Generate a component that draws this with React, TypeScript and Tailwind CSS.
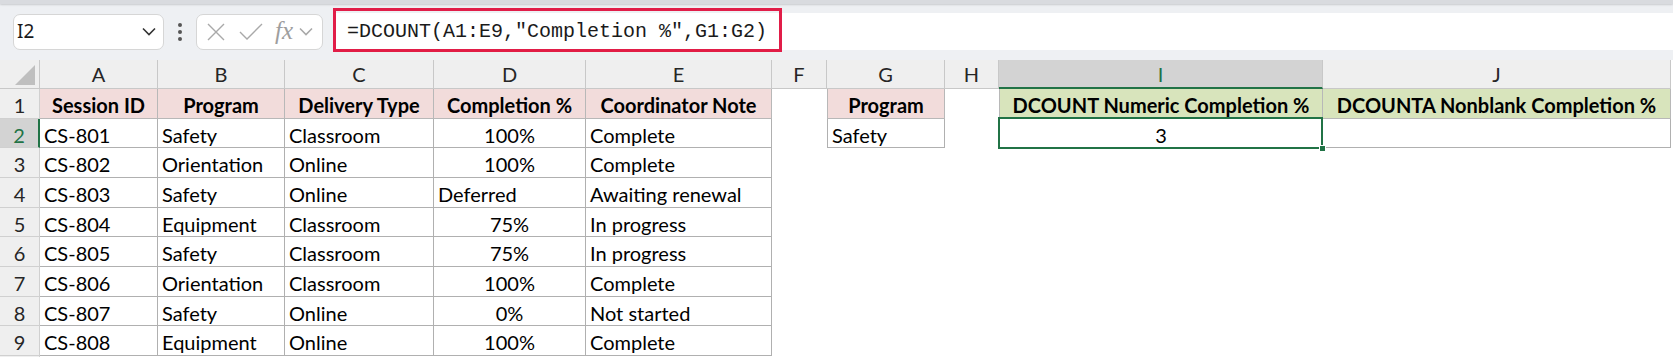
import React from "react";

const COLS = ["A", "B", "C", "D", "E", "F", "G", "H", "I", "J"];

type CellDef = { t?: string; align?: "l" | "c" };

const data: CellDef[][] = [
  [
    { t: "Session ID", align: "c" },
    { t: "Program", align: "c" },
    { t: "Delivery Type", align: "c" },
    { t: "Completion %", align: "c" },
    { t: "Coordinator Note", align: "c" },
  ],
  [{ t: "CS-801" }, { t: "Safety" }, { t: "Classroom" }, { t: "100%", align: "c" }, { t: "Complete" }],
  [{ t: "CS-802" }, { t: "Orientation" }, { t: "Online" }, { t: "100%", align: "c" }, { t: "Complete" }],
  [{ t: "CS-803" }, { t: "Safety" }, { t: "Online" }, { t: "Deferred" }, { t: "Awaiting renewal" }],
  [{ t: "CS-804" }, { t: "Equipment" }, { t: "Classroom" }, { t: "75%", align: "c" }, { t: "In progress" }],
  [{ t: "CS-805" }, { t: "Safety" }, { t: "Classroom" }, { t: "75%", align: "c" }, { t: "In progress" }],
  [{ t: "CS-806" }, { t: "Orientation" }, { t: "Classroom" }, { t: "100%", align: "c" }, { t: "Complete" }],
  [{ t: "CS-807" }, { t: "Safety" }, { t: "Online" }, { t: "0%", align: "c" }, { t: "Not started" }],
  [{ t: "CS-808" }, { t: "Equipment" }, { t: "Online" }, { t: "100%", align: "c" }, { t: "Complete" }],
];

function XIcon() {
  return (
    <svg width="20" height="20" viewBox="0 0 20 20" fill="none" stroke="#a9a9a9" strokeWidth="1.4">
      <path d="M2 2 L18 18 M18 2 L2 18" />
    </svg>
  );
}
function CheckIcon() {
  return (
    <svg width="24" height="18" viewBox="0 0 24 18" fill="none" stroke="#a9a9a9" strokeWidth="1.4">
      <path d="M1 9 L8 16 L23 1" />
    </svg>
  );
}
function Chevron({ color = "#333", w = 14 }: { color?: string; w?: number }) {
  return (
    <svg width={w} height="9" viewBox="0 0 14 9" fill="none" stroke={color} strokeWidth="1.6">
      <path d="M1 1.5 L7 7.5 L13 1.5" />
    </svg>
  );
}

function DataCell({ r, c }: { r: number; c: number }) {
  const col = COLS[c];
  const base = "flex items-center pt-[3px] whitespace-nowrap text-[20px] text-black";
  if (c <= 4) {
    const d = data[r][c];
    if (r === 0) {
      return (
        <div className={`${base} overflow-hidden justify-center font-bold bg-[#f2dcdb] border-r border-b border-[#b8b8b8]`}>
          {d.t}
        </div>
      );
    }
    return (
      <div
        className={`${base} overflow-hidden ${d.align === "c" ? "justify-center" : "justify-start pl-[4px]"} bg-white border-r border-b border-[#b0b0b0]`}
      >
        {d.t}
      </div>
    );
  }
  if (col === "G" && r <= 1) {
    return r === 0 ? (
      <div className={`${base} justify-center font-bold bg-[#f2dcdb] border-l border-r border-b border-[#b8b8b8]`}>
        Program
      </div>
    ) : (
      <div className={`${base} justify-start pl-[4px] bg-white border-l border-r border-b border-[#b0b0b0]`}>
        Safety
      </div>
    );
  }
  if (col === "I" && r <= 1) {
    return r === 0 ? (
      <div className={`${base} justify-center font-bold bg-[#d8e4bc] border-l border-r border-b border-[#b8b8b8]`}>
        DCOUNT Numeric Completion %
      </div>
    ) : (
      <div className={`${base} relative z-10 justify-center bg-white border-l border-r border-b border-[#b0b0b0]`}>
        3
        <div className="absolute -left-[2px] -top-[2px] -right-[1px] -bottom-[2px] border-2 border-[#217346] pointer-events-none" />
        <div className="absolute -right-[4px] -bottom-[5px] w-[7px] h-[7px] bg-[#217346] border border-white" />
      </div>
    );
  }
  if (col === "J" && r <= 1) {
    return r === 0 ? (
      <div className={`${base} justify-center font-bold bg-[#d8e4bc] border-r border-b border-[#b8b8b8]`}>
        DCOUNTA Nonblank Completion %
      </div>
    ) : (
      <div className={`${base} bg-white border-r border-b border-[#b0b0b0]`} />
    );
  }
  return <div className="bg-white" />;
}

export default function App() {
  return (
    <div className="w-[1673px] h-[357px] overflow-hidden bg-white [font-family:Lato,sans-serif]">
      {/* Formula bar area */}
      <div className="relative h-[60px] bg-[#eef0f3]">
        <div className="h-[4px] bg-[#d9dbdf] shadow-[0_1px_2px_rgba(0,0,0,0.15)]" />
        <div className="flex items-center pl-[13px] pt-[9px]">
          <div className="flex items-center justify-between w-[151px] h-[36px] bg-white rounded-[7px] border border-[#d6d6d6] pl-[3px] pr-[7px]">
            <span className="text-[19px] text-[#1a1a1a] [font-family:'Noto_Sans',sans-serif]">I2</span>
            <Chevron />
          </div>
          <div className="flex flex-col items-center justify-center gap-[3px] w-[32px]">
            <div className="w-[4px] h-[4px] rounded-full bg-[#555]" />
            <div className="w-[4px] h-[4px] rounded-full bg-[#555]" />
            <div className="w-[4px] h-[4px] rounded-full bg-[#555]" />
          </div>
          <div className="flex items-center w-[127px] h-[36px] bg-white rounded-[7px] border border-[#d6d6d6] pl-[9px]">
            <XIcon />
            <div className="ml-[13px]">
              <CheckIcon />
            </div>
            <span className="ml-[12px] text-[25px] italic text-[#9e9e9e] [font-family:'Liberation_Serif',serif] leading-none -mt-[3px]">
              fx
            </span>
            <div className="ml-[6px]">
              <Chevron color="#a9a9a9" w={14} />
            </div>
          </div>
          <div className="flex items-center ml-[10px] flex-1 h-[37px] bg-white pl-[14px]">
            <span className="text-[20px] text-[#1a1a1a] [font-family:'Liberation_Mono',monospace]">
              =DCOUNT(A1:E9,"Completion %",G1:G2)
            </span>
          </div>
        </div>
        <div className="absolute left-[333px] top-[8px] w-[449px] h-[44px] border-[3px] border-[#e11d48] pointer-events-none" />
      </div>

      {/* Grid */}
      <div className="grid grid-cols-[40px_118px_127px_149px_152px_186px_55px_118px_54px_324px_348px] grid-rows-[29px_30px_29px_30px_30px_29px_30px_30px_29px_30px_20px]">
        {/* header row */}
        <div className="relative bg-[#efefef] border-r border-b border-[#c8c8c8]">
          <svg className="absolute right-[4px] bottom-[3px]" width="20" height="20" viewBox="0 0 20 20">
            <path d="M20 0 L20 20 L0 20 Z" fill="#bfbfbf" />
          </svg>
        </div>
        {COLS.map((c) =>
          c === "I" ? (
            <div
              key={c}
              className="flex items-center justify-center bg-[#d3d3d3] border-r border-[#c8c8c8] border-b-2 border-b-[#217346] text-[20px] text-[#217346]"
            >
              {c}
            </div>
          ) : (
            <div
              key={c}
              className="flex items-center justify-center bg-[#efefef] border-r border-b border-[#c8c8c8] text-[20px] text-[#262626]"
            >
              {c}
            </div>
          )
        )}
        {Array.from({ length: 9 }).map((_, r) => (
          <React.Fragment key={r}>
            {r === 1 ? (
              <div className="flex items-center justify-center pt-[3px] bg-[#d3d3d3] border-b border-[#d0d0d0] border-r-2 border-r-[#217346] text-[20px] text-[#217346]">
                {r + 1}
              </div>
            ) : (
              <div className="flex items-center justify-center pt-[3px] bg-[#efefef] border-b border-r border-[#d0d0d0] text-[20px] text-[#262626]">
                {r + 1}
              </div>
            )}
            {COLS.map((_, c) => (
              <DataCell key={c} r={r} c={c} />
            ))}
          </React.Fragment>
        ))}
        <div className="bg-[#efefef] border-r border-[#d0d0d0]" />
        {COLS.map((c) => (
          <div key={c} className="bg-white" />
        ))}
      </div>
    </div>
  );
}
